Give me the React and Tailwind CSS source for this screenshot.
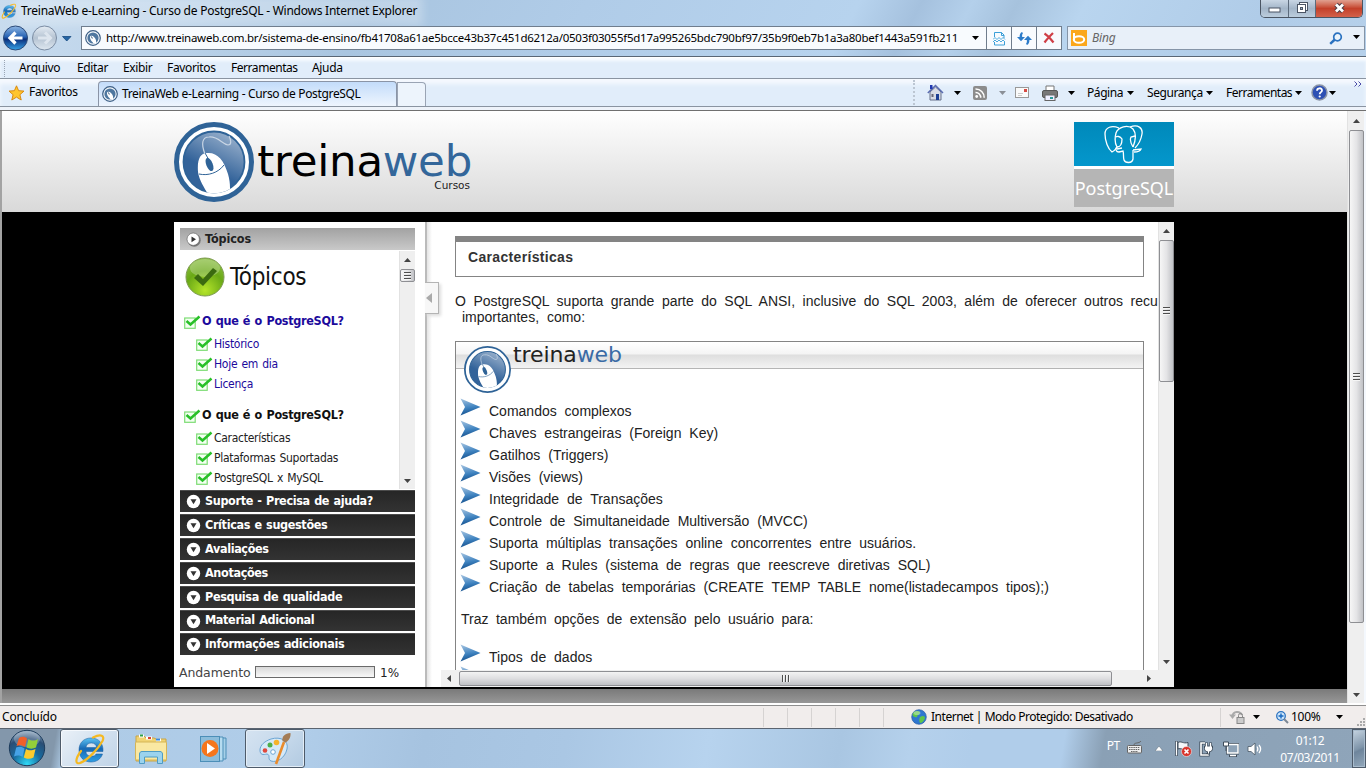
import React from "react";

const Tri = ({ className = "", w = 7 }) => (
  <svg className={"shrink-0 fill-current " + className} width={w} height="4" viewBox="0 0 7 4" preserveAspectRatio="none">
    <path d="M0 0h7L3.5 4z" />
  </svg>
);

const Mouse = ({ size, ring = 5, id }) => (
  <svg className="shrink-0" width={size} height={size} viewBox="0 0 80 80">
    <defs>
      <linearGradient id={id} x1="0.8" y1="0" x2="0.3" y2="1">
        <stop offset="0" stopColor="#9fb5cf" />
        <stop offset="0.65" stopColor="#33639a" />
      </linearGradient>
      <clipPath id={id + "c"}><circle cx="40" cy="40" r="31.5" /></clipPath>
    </defs>
    <circle cx="40" cy="40" r={40 - ring / 2} fill="#fff" stroke="#2f6397" strokeWidth={ring} />
    <circle cx="40" cy="40" r="30.5" fill={"url(#" + id + ")"} stroke="#2f6397" strokeWidth="1.8" />
    <g clipPath={"url(#" + id + "c)"}>
      <path d="M31 32C27 22 28 15 35 15C44 14 48 22 54 23C58 23 57 18 55 14" fill="none" stroke="#c8d5e4" strokeWidth="1.2" />
      <path d="M24 50C23 38 26 31 33 31C43 30 50 38 54 52C57 62 56 70 55 80H38C34 70 26 62 24 50Z" fill="#fff" />
    </g>
    <path d="M25 52C34 54 44 51 50 43" fill="none" stroke="#2f6397" strokeWidth="1" />
    <path d="M31 31L35 38" stroke="#2f6397" strokeWidth="1" />
    <ellipse cx="35.5" cy="42.5" rx="3.2" ry="7" fill="#2f6397" transform="rotate(-22 35.5 42.5)" />
  </svg>
);

const FavMouse = () => (
  <svg className="shrink-0" width="16" height="16" viewBox="0 0 16 16">
    <circle cx="8" cy="8" r="7.3" fill="#f4f8fc" stroke="#3c5f86" strokeWidth="1.2" />
    <circle cx="8" cy="8" r="5.6" fill="#4f779f" />
    <path d="M5 7C5.200 5.400 7.500 5.200 9 7C11 9 11.500 11 11 13.500L8.500 13.600C7.500 11.500 4.800 10 5 7Z" fill="#fff" />
    <path d="M6.500 6.500L7.300 8.500" stroke="#2d5178" strokeWidth="1" />
  </svg>
);

const IELogo = ({ size }) => (
  <svg className="shrink-0" width={size} height={size} viewBox="0 0 32 32">
    <defs>
      <linearGradient id={"ie" + size} x1="0" y1="0" x2="0" y2="1">
        <stop offset="0" stopColor="#5cc3f3" />
        <stop offset="0.45" stopColor="#1768b4" />
        <stop offset="1" stopColor="#2f9fe4" />
      </linearGradient>
    </defs>
    <path fillRule="evenodd" d="M29 18.500H12C12 21.500 14 23.300 17.500 23.300C20 23.300 21.500 22.300 22 21H28.500C27 26 22.500 29 17 29C9.500 29 5 24 5 17C5 10 9.500 5 17 5C25 5 29.500 10.500 29 18.500ZM12 14.500H22.500C22.500 11.800 20.500 10 17.200 10C14 10 12.200 12 12 14.500Z" fill={"url(#ie" + size + ")"} stroke="#16589a" strokeWidth="0.5" />
    <path d="M7 18C1 26 1 31.500 6 30C14 27 24 16 28.500 8C31 2.500 27 0.500 19 4.500" fill="none" stroke="#f5b921" strokeWidth="2.200" strokeLinecap="round" />
  </svg>
);

const Grip = ({ vertical }) =>
  vertical ? (
    <div className="flex flex-col gap-px">
      {[0, 1, 2].map((i) => <div key={i} className="h-[2px] w-[7px] border-b border-[#f5f5f5] bg-[#4d4d4d]" />)}
    </div>
  ) : (
    <div className="flex gap-px">
      {[0, 1, 2].map((i) => <div key={i} className="h-[7px] w-[2px] border-r border-[#f5f5f5] bg-[#4d4d4d]" />)}
    </div>
  );

const Up = () => (
  <svg width="7" height="4" viewBox="0 0 7 4"><path d="M0 4h7L3.500 0z" fill="#444" /></svg>
);

const VScroll = ({ className, thumb, cap = "h-[18px]" }) => (
  <div className={"flex shrink-0 flex-col items-center bg-[#efefef] border-l border-[#e2e2e2] " + className}>
    <div className={"flex shrink-0 items-center " + cap}><Up /></div>
    <div className={"flex w-[15px] shrink-0 items-center justify-center rounded-[2px] border border-[#8e8f93] bg-linear-to-r from-[#f6f6f6] via-[#e4e4e6] to-[#c1c2c6] " + thumb}>
      <Grip vertical />
    </div>
    <div className="grow" />
    <div className="flex h-[17px] shrink-0 items-center"><Tri className="text-[#444]" /></div>
  </div>
);

const CheckBox = () => (
  <svg className="shrink-0" width="17" height="14" viewBox="0 0 17 14">
    <rect x="0.700" y="3" width="10.500" height="10.300" fill="#f4fff2" stroke="#7ddc74" strokeWidth="1.200" />
    <path d="M2.500 6L6.500 9.500L15.500 1.500" fill="none" stroke="#28c028" strokeWidth="2.500" />
  </svg>
);

const Item = ({ children, className = "" }) => (
  <div className={"flex h-[20px] items-center gap-px pl-[16px] font-['DejaVu_Sans_Condensed','DejaVu_Sans',sans-serif] text-[12px] tracking-[-0.28px] [word-spacing:1px] " + className}>
    <CheckBox />
    <span className="whitespace-nowrap">{children}</span>
  </div>
);

const Group = ({ children, className = "" }) => (
  <div className={"flex shrink-0 items-center gap-px pl-[4px] font-['DejaVu_Sans_Condensed','DejaVu_Sans',sans-serif] text-[12.500px] font-bold tracking-[-0.3px] [word-spacing:0.8px] " + className}>
    <CheckBox />
    <span className="whitespace-nowrap">{children}</span>
  </div>
);

const Bar = ({ children, h = "h-[22px]" }) => (
  <div className={"flex shrink-0 items-center gap-[4px] border-t border-[#4c4c4c] bg-linear-to-b from-[#262626] to-[#333] pl-[6px] text-white " + h}>
    <svg className="shrink-0" width="15" height="15" viewBox="0 0 15 15">
      <circle cx="7.500" cy="7.500" r="6.700" fill="#fff" />
      <path d="M4.500 5.200h6L7.500 10.300z" fill="#333" />
    </svg>
    <span className="whitespace-nowrap pb-px font-['DejaVu_Sans_Condensed','DejaVu_Sans',sans-serif] text-[12.500px] font-bold tracking-[-0.35px] [word-spacing:0.8px]">{children}</span>
  </div>
);

const Bullet = ({ children }) => (
  <div className="flex h-[22px] shrink-0">
    <svg className="shrink-0" width="22" height="20" viewBox="0 0 22 20">
      <defs>
        <linearGradient id="blt" x1="0" y1="0" x2="0.200" y2="1">
          <stop offset="0" stopColor="#a9c6e2" />
          <stop offset="0.600" stopColor="#3f83c0" />
          <stop offset="1" stopColor="#14508e" />
        </linearGradient>
      </defs>
      <path d="M0.500 0.500L20.500 9L0.500 17.500L5 9Z" fill="url(#blt)" />
    </svg>
    <span className="whitespace-nowrap pl-[7px] pt-[2px] leading-[22px]">{children}</span>
  </div>
);

const Glass = "bg-[linear-gradient(118deg,#c9dcee_0px,#bdd4ea_150px,#a9c5e0_330px,#b0cce8_520px,#b7d3ee_760px,#a5c1de_815px,#b4d0eb_860px,#a6c2dd_900px,#b9d5ef_960px,#b0cce8_1120px,#bcd5ed_1366px)]";

const TitleBar = () => (
  <div className="flex h-[24px] shrink-0 items-start justify-between">
    <div className="flex h-[22px] items-center pl-px">
      <IELogo size={16} />
      <span className="ml-[4px] whitespace-nowrap bg-white/25 text-[12px] tracking-[-0.25px] shadow-[0_0_8px_6px_rgba(255,255,255,0.25)]">
        TreinaWeb e-Learning - Curso de PostgreSQL - Windows Internet Explorer
      </span>
    </div>
    <div className="mr-[3px] flex h-[18px] w-[103px] overflow-hidden rounded-b-[5px] border border-t-0 border-[#4a5563]">
      <div className="flex w-[28px] items-center justify-center border-r border-[#5c6b7c] bg-linear-to-b from-[#c9d6e4] via-[#a3b5c8] to-[#bccddd]">
        <svg width="13" height="12" viewBox="0 0 13 12"><rect x="1" y="5" width="11" height="4" fill="#fff" stroke="#4b5565" /></svg>
      </div>
      <div className="flex w-[27px] items-center justify-center border-r border-[#5c6b7c] bg-linear-to-b from-[#c9d6e4] via-[#a3b5c8] to-[#bccddd]">
        <svg className="mb-[2px]" width="13" height="13" viewBox="0 0 13 13">
          <rect x="3.500" y="1.500" width="8" height="8" fill="#fff" stroke="#4b5565" />
          <rect x="1.500" y="3.500" width="8" height="8" fill="#fff" stroke="#4b5565" />
          <rect x="4.500" y="6.500" width="2" height="2" fill="#9fb1c5" stroke="#4b5565" />
        </svg>
      </div>
      <div className="flex grow items-center justify-center bg-linear-to-b from-[#e0a090] via-[#c3402a] to-[#d3614a]">
        <svg className="mb-[2px]" width="13" height="12" viewBox="0 0 13 12">
          <path d="M3 2.500L10 9.500M10 2.500L3 9.500" stroke="#4b3c44" strokeWidth="4.800" />
          <path d="M3 2.500L10 9.500M10 2.500L3 9.500" stroke="#fff" strokeWidth="2.800" />
        </svg>
      </div>
    </div>
  </div>
);

const AddressRow = () => (
  <div className="flex h-[32px] shrink-0 items-start pl-[2px] pt-[2px]">
    <svg className="mt-[-2px] shrink-0" width="72" height="28" viewBox="0 0 72 28">
      <defs>
        <linearGradient id="bk" x1="0" y1="0" x2="0" y2="1">
          <stop offset="0" stopColor="#8fb7e4" /><stop offset="0.450" stopColor="#2763b4" /><stop offset="0.550" stopColor="#0a2f7c" /><stop offset="1" stopColor="#37a3e8" />
        </linearGradient>
        <linearGradient id="fw" x1="0" y1="0" x2="0" y2="1">
          <stop offset="0" stopColor="#e4ecf4" /><stop offset="0.500" stopColor="#b5c3d2" /><stop offset="1" stopColor="#dfe8f0" />
        </linearGradient>
      </defs>
      <circle cx="13.500" cy="14" r="12" fill="url(#bk)" stroke="#2c4a78" />
      <path d="M20.500 14H9M13.500 8.500L8 14l5.500 5.500" fill="none" stroke="#fff" strokeWidth="3.200" />
      <circle cx="42.500" cy="14" r="12" fill="url(#fw)" stroke="#7a8ca3" />
      <path d="M36 14h11M43 8.500L48.500 14L43 19.500" fill="none" stroke="#dde5ee" strokeWidth="3" />
      <path d="M60.500 12.500h8.500L64.750 17z" fill="#2565a4" stroke="#174a80" strokeWidth="0.800" />
    </svg>
    <div className="ml-[7px] flex h-[24px] w-[981px] shrink-0 items-center border border-[#6f7d8d] bg-[#f8fbfe]">
      <div className="ml-[3px]"><FavMouse /></div>
      <span className="ml-[5px] w-[860px] whitespace-nowrap text-[11.500px] tracking-[-0.26px]">
        http://www.treinaweb.com.br/sistema-de-ensino/fb41708a61ae5bcce43b37c451d6212a/0503f03055f5d17a995265bdc790bf97/35b9f0eb7b1a3a80bef1443a591fb211
      </span>
      <Tri className="ml-[6px]" />
      <div className="ml-auto flex h-full">
        <div className="flex w-[25px] items-center justify-center border-l border-[#6f7d8d]">
          <svg width="13" height="15" viewBox="0 0 13 15" fill="none" stroke="#3b9fd8">
            <path d="M1.500 6V1.500h7l2.500 2.500v3M8.500 1.500v3H11M1.500 11v3h10v-3" /><path d="M0 8.500l2-2 2 2 2-2 2 2 2-2 2 2M0 11l2-2 2 2 2-2 2 2 2-2 2 2" strokeWidth="0.900" />
          </svg>
        </div>
        <div className="flex w-[25px] items-center justify-center border-l border-[#6f7d8d]">
          <svg width="15" height="13" viewBox="0 0 15 13" fill="#2b7bc9">
            <path d="M5 0L6 1.200C5 2.300 5 3.500 5.200 5H8L4 9.200L0 5H2.600C2.600 2.500 3.200 1 5 0Z" />
            <path d="M10 13L9 11.800C10 10.700 10 9.500 9.800 8H7L11 3.800L15 8H12.400C12.400 10.500 11.800 12 10 13Z" />
          </svg>
        </div>
        <div className="flex w-[25px] items-center justify-center border-l border-[#6f7d8d]">
          <svg width="12" height="12" viewBox="0 0 12 12"><path d="M1.500 1.500C4 3 8 7 10.500 10.500M10 1C7 4 4 7 1.500 10.500" fill="none" stroke="#cf3f46" strokeWidth="2.200" /></svg>
        </div>
      </div>
    </div>
    <div className="ml-[5px] flex h-[24px] w-[298px] shrink-0 items-center border border-[#8595a8] bg-[#e8f0f9]">
      <div className="ml-[3px] flex h-[16px] w-[16px] items-center justify-center bg-[#fba71b]">
        <svg width="14" height="13" viewBox="0 0 14 13"><path d="M2 1V9" stroke="#fff" strokeWidth="2" /><ellipse cx="7" cy="7.500" rx="5.200" ry="3.300" fill="none" stroke="#fff" strokeWidth="2" /></svg>
      </div>
      <span className="ml-[5px] text-[12px] italic tracking-[-0.2px] text-[#666]">Bing</span>
      <svg className="ml-auto" width="14" height="13" viewBox="0 0 14 13"><circle cx="8.500" cy="5" r="3.800" fill="#eaf4fc" stroke="#2a72c0" strokeWidth="1.700" /><path d="M5.800 7.500L1.200 11.800" stroke="#2a72c0" strokeWidth="2.400" /></svg>
      <Tri className="ml-[10px] mr-[4px] mb-[3px]" />
    </div>
  </div>
);

const MenuBar = () => (
  <div className="flex h-[21px] shrink-0 items-center border-t border-white bg-[#e1edfa] text-[12px] tracking-[-0.35px] shadow-[inset_0_3px_3px_#f8fbff]">
    <div className="ml-[4px] h-[17px] w-[2px] border-l border-dotted border-[#9aa5b4]" />
    <span className="ml-[13px] w-[58px]">Arquivo</span>
    <span className="w-[46px]">Editar</span>
    <span className="w-[44px]">Exibir</span>
    <span className="w-[64px]">Favoritos</span>
    <span className="w-[81px] tracking-[-0.45px]">Ferramentas</span>
    <span>Ajuda</span>
  </div>
);

const TabRow = () => (
  <div className="flex h-[29px] shrink-0 border-y border-[#8a94a1] bg-[#e1edfa] text-[12px] tracking-[-0.35px] shadow-[inset_0_5px_4px_#f5f9fe]">
    <div className="flex w-[98px] shrink-0 items-center pl-[8px]">
      <svg width="17" height="16" viewBox="0 0 17 16"><path d="M8.500 0.800L10.600 5.700L16 6.100L11.900 9.700L13.200 15L8.500 12.100L3.800 15L5.100 9.700L1 6.100L6.400 5.700Z" fill="#ffc52e" stroke="#d98a12" strokeWidth="1" /></svg>
      <span className="ml-[4px] pb-[2px]">Favoritos</span>
    </div>
    <div className="mt-[2px] flex w-[299px] shrink-0 items-center rounded-t-[4px] border border-b-0 border-[#8a94a6] bg-linear-to-b from-[#c3dcfa] to-[#eef5fe] pl-[3px]">
      <FavMouse />
      <span className="ml-[4px] whitespace-nowrap tracking-[-0.34px]">TreinaWeb e-Learning - Curso de PostgreSQL</span>
    </div>
    <div className="mt-[3px] w-[29px] shrink-0 rounded-tr-[4px] border border-b-0 border-[#9aa4b4] bg-[#edf4fc]" />
    <div className="ml-[487px] mt-px h-[25px] w-[3px] shrink-0 border-l-2 border-dotted border-[#bcc6d2]" />
    <div className="flex grow items-center tracking-[-0.42px]">
      <svg className="ml-[11px] shrink-0" width="17" height="17" viewBox="0 0 17 17">
        <path d="M3 8v8h11V8L8.500 3z" fill="#d8dce6" stroke="#67708a" /><path d="M0.800 9L8.500 1.500L16 9" fill="none" stroke="#5a6cb0" strokeWidth="1.500" /><rect x="3" y="1" width="2.500" height="4" fill="#2038b0" /><rect x="9" y="10" width="3" height="6" fill="#1d3f94" /><rect x="4.500" y="10" width="2" height="3" fill="#667" />
      </svg>
      <Tri className="ml-[10px]" />
      <svg className="ml-[12px] shrink-0" width="14" height="14" viewBox="0 0 14 14"><rect width="14" height="14" rx="2" fill="#8c8c8c" /><circle cx="3.700" cy="10.500" r="1.400" fill="#fff" /><path d="M2.500 6.500A5 5 0 0 1 7.700 11.800M2.500 3A8.500 8.500 0 0 1 11.200 11.800" fill="none" stroke="#fff" strokeWidth="1.500" /></svg>
      <Tri className="ml-[12px] text-[#8a8f96]" />
      <svg className="ml-[9px] shrink-0" width="14" height="11" viewBox="0 0 14 11"><rect x="0.500" y="0.500" width="13" height="10" fill="#fafafa" stroke="#999" /><rect x="9" y="2" width="3" height="3" fill="#d64a42" /><path d="M3 6.500h5M3 8.500h4" stroke="#ccc" /></svg>
      <svg className="ml-[13px] shrink-0" width="16" height="16" viewBox="0 0 16 16"><path d="M4 6V1h8v5" fill="#fff" stroke="#777" /><rect x="0.500" y="5.500" width="15" height="7" rx="1.500" fill="#777" stroke="#555" /><rect x="3" y="10" width="10" height="5.500" fill="#eef" stroke="#666" /><rect x="8" y="12" width="3" height="2" fill="#2a9a9a" /></svg>
      <Tri className="ml-[10px]" />
      <span className="ml-[12px] w-[40px]">Página</span><Tri />
      <span className="ml-[13px] w-[59px]">Segurança</span><Tri />
      <span className="ml-[13px] w-[69px] tracking-[-0.5px]">Ferramentas</span><Tri />
      <svg className="ml-[9px] shrink-0" width="17" height="17" viewBox="0 0 17 17"><circle cx="8.500" cy="8.500" r="7.500" fill="#2d50b4" stroke="#8b94a6" strokeWidth="1.500" /><path d="M6 6.700C6 3.500 11 3.500 11 6.500C11 8.200 8.700 8.200 8.700 10.300" fill="none" stroke="#fff" strokeWidth="1.800" /><circle cx="8.700" cy="12.500" r="1.100" fill="#fff" /></svg>
      <Tri className="ml-px" />
      <svg className="ml-[18px] mb-[17px] shrink-0" width="8" height="6" viewBox="0 0 8 6" fill="none" stroke="#4a4aa8"><path d="M0.500 0.500L3 3L0.500 5.500M4.500 0.500L7 3L4.500 5.500" /></svg>
    </div>
  </div>
);

const PageHeader = () => (
  <div className="flex h-[101px] shrink-0 items-start bg-linear-to-b from-white to-[#d9d9d9] pl-[172px] pt-[11px]">
    <Mouse size={80} ring={5} id="mh" />
    <div className="flex w-[218px] flex-col items-end">
      <div className="mt-[20px] whitespace-nowrap font-['DejaVu_Sans',sans-serif] text-[43.500px] leading-[38px] tracking-[-0.25px] text-black">
        treina<span className="text-[#33669a]">web</span>
      </div>
      <span className="pr-[2px] font-['DejaVu_Sans',sans-serif] text-[10.500px] leading-[10px] text-[#222]">Cursos</span>
    </div>
    <div className="ml-[602px] flex w-[100px] flex-col gap-[3px] bg-white">
      <div className="flex h-[44px] justify-center bg-linear-to-b from-[#0089ba] to-[#0497cc] pt-[3px]">
        <svg width="40" height="39" viewBox="0 0 40 39" fill="none" stroke="#fff" strokeWidth="1.300">
          <path d="M15 3C8 0 1 2 1 9C1 16 4 24 8 27C11 26 12 23 13 22C10 17 11 12 12 8C14 2 24 -1 29 4C33 9 31 17 29 22" />
          <path d="M26 2C34 -1 39 3 38 9C37 15 34 20 31 23M13 22C17 22 18 19 18 14C16 11 13 11 12 12M13 22C11 24 12 27 15 27L19 26C20 29 19 32 20 35C21 38 28 39 29 34V25M29 22C26 17 26 14 27 12L31 11M29 25L37 24C36 27 33 27 30 27M13 24L18 23" />
        </svg>
      </div>
      <div className="flex h-[38px] items-center justify-center bg-[#b5b5b5] text-[18px] text-white">PostgreSQL</div>
    </div>
  </div>
);

const Sidebar = () => (
  <div className="flex w-[251px] shrink-0 flex-col pl-[6px] pt-[6px] pr-[10px]">
    <div className="flex h-[22px] shrink-0 items-center gap-[4px] bg-linear-to-b from-[#a2a2a2] to-[#c9c9c9] pl-[6px]">
      <svg width="15" height="15" viewBox="0 0 15 15"><circle cx="8.200" cy="8.200" r="6.500" fill="#777" /><circle cx="7.200" cy="7.200" r="6.200" fill="#fff" stroke="#555" strokeWidth="0.600" /><path d="M5.500 4.500L10 7.300L5.500 10.200z" fill="#333" /></svg>
      <span className="font-['DejaVu_Sans_Condensed','DejaVu_Sans',sans-serif] text-[12.500px] font-bold tracking-[-0.1px] text-[#222]">Tópicos</span>
    </div>
    <div className="flex h-[240px] shrink-0 pt-px pb-px">
      <div className="flex grow flex-col">
        <div className="flex h-[52px] shrink-0 items-center pl-[5px]">
          <svg width="40" height="40" viewBox="0 0 40 40">
            <defs><radialGradient id="gb" cx="0.500" cy="0.850" r="0.850"><stop offset="0" stopColor="#b5e52a" /><stop offset="0.600" stopColor="#6aa916" /><stop offset="1" stopColor="#8cbf45" /></radialGradient></defs>
            <circle cx="20" cy="20" r="19" fill="url(#gb)" stroke="#7d9a50" />
            <ellipse cx="20" cy="11" rx="15" ry="9" fill="#fff" fillOpacity="0.250" />
            <path d="M9 21L13 17L18 22L28 11L32 14L18 29Z" fill="#3b6a10" />
          </svg>
          <span className="ml-[5px] font-['DejaVu_Sans_Condensed','DejaVu_Sans',sans-serif] text-[24px] tracking-[-0.3px] text-[#111]">Tópicos</span>
        </div>
        <Group className="mt-[6px] h-[25px] text-[#1c0a9c]">O que é o PostgreSQL?</Group>
        <Item className="text-[#1c0a9c]">Histórico</Item>
        <Item className="text-[#1c0a9c]">Hoje em dia</Item>
        <Item className="text-[#1c0a9c]">Licença</Item>
        <Group className="mt-[9px] h-[25px] text-[#111]">O que é o PostgreSQL?</Group>
        <Item className="text-[#222]">Características</Item>
        <Item className="text-[#222]">Plataformas Suportadas</Item>
        <Item className="text-[#222]">PostgreSQL x MySQL</Item>
      </div>
      <VScroll className="w-[16px]" thumb="h-[13px]" />
    </div>
    <div className="flex flex-col gap-[2px]">
      <Bar>Suporte - Precisa de ajuda?</Bar>
      <Bar>Críticas e sugestões</Bar>
      <Bar>Avaliações</Bar>
      <Bar>Anotações</Bar>
      <Bar>Pesquisa de qualidade</Bar>
      <Bar h="h-[21px]">Material Adicional</Bar>
      <Bar>Informações adicionais</Bar>
    </div>
    <div className="ml-[-1px] mt-[9px] flex h-[18px] items-center font-['DejaVu_Sans',sans-serif] text-[12.500px] text-[#444]">
      <span className="w-[76px] tracking-[-0.1px]">Andamento</span>
      <div className="mb-[2px] h-[12px] w-[120px] border border-[#6a6a6a] bg-linear-to-b from-[#d9d9d9] to-[#f8f8f8]" />
      <span className="ml-[5px] text-[12px] text-[#222]">1%</span>
    </div>
  </div>
);

const Content = () => (
  <div className="flex h-[448px] w-[717px] shrink-0 flex-col overflow-hidden pl-[14px] pt-[14px] font-['Liberation_Sans',Arial,sans-serif] text-[14px] text-[#222] [word-spacing:4px]">
    <div className="h-[41px] w-[689px] shrink-0 border border-t-[6px] border-[#848484] pl-[12px] pt-[6px] font-bold leading-[18px] tracking-[0.33px] text-[#333]">Características</div>
    <p className="mt-[16px] w-[900px] shrink-0 whitespace-pre leading-[16px] [word-spacing:3.600px]">{"O PostgreSQL suporta grande parte do SQL ANSI, inclusive do SQL 2003, além de oferecer outros recursos"}</p>
    <p className="shrink-0 pl-[7px] leading-[16px]">importantes, como:</p>
    <div className="mt-[16px] flex w-[689px] shrink-0 flex-col border border-[#848484]">
      <div className="flex h-[27px] items-start border-b border-[#b5b5b5] bg-[linear-gradient(#fff_0,#f4f4f4_12px,#dedede_13px,#f3f3f3_26px)] pl-[8px]">
        <div className="mt-[4px]"><Mouse size={47} ring={3} id="mc" /></div>
        <span className="ml-[2px] font-['DejaVu_Sans',sans-serif] text-[22px] leading-[26px] tracking-[-0.1px] text-[#222]">treina<span className="text-[#3a6ba5]">web</span></span>
      </div>
      <div className="mt-[29px] flex flex-col pl-[4px]">
        <Bullet>Comandos complexos</Bullet>
        <Bullet>Chaves estrangeiras (Foreign Key)</Bullet>
        <Bullet>Gatilhos (Triggers)</Bullet>
        <Bullet>Visões (views)</Bullet>
        <Bullet>Integridade de Transações</Bullet>
        <Bullet>Controle de Simultaneidade Multiversão (MVCC)</Bullet>
        <Bullet>Suporta múltiplas transações online concorrentes entre usuários.</Bullet>
        <Bullet>Suporte a Rules (sistema de regras que reescreve diretivas SQL)</Bullet>
        <Bullet>Criação de tabelas temporárias (CREATE TEMP TABLE nome(listadecampos tipos);)</Bullet>
        <p className="mb-[16px] mt-[15px] pl-px leading-[17px] [word-spacing:3.600px]">Traz também opções de extensão pelo usuário para:</p>
        <Bullet>Tipos de dados</Bullet>
        <Bullet>Funções</Bullet>
      </div>
    </div>
  </div>
);

const Course = () => (
  <div className="ml-[172px] mt-[10px] flex h-[465px] w-[1000px] bg-white">
    <Sidebar />
    <div className="flex w-[16px] shrink-0 items-start border-l-2 border-[#bbb] bg-[linear-gradient(90deg,#e4e4e4,#fff_5px)] pt-[60px]">
      <div className="ml-[-2px] flex h-[32px] w-[14px] items-center justify-center border border-l-0 border-[#b4b4b4] bg-[#f7f7f7] pr-[5px] shadow-[2px_2px_3px_#ddd]">
        <svg width="6" height="10" viewBox="0 0 6 10"><path d="M6 0v10L0 5z" fill="#aaa" /></svg>
      </div>
    </div>
    <div className="flex w-[717px] shrink-0 flex-col">
      <Content />
      <div className="flex h-[17px] w-[717px] shrink-0 items-center bg-[#f0f0f0]">
        <svg className="ml-[6px]" width="4" height="7" viewBox="0 0 4 7"><path d="M4 0v7L0 3.500z" fill="#444" /></svg>
        <div className="ml-[8px] flex h-[15px] w-[653px] items-center justify-center rounded-[2px] border border-[#8e8f93] bg-linear-to-b from-[#f3f3f3] via-[#dedee0] to-[#bfc0c4]"><Grip /></div>
        <svg className="ml-auto mr-[7px]" width="4" height="7" viewBox="0 0 4 7"><path d="M0 0v7L4 3.500z" fill="#444" /></svg>
      </div>
    </div>
    <div className="flex w-[16px] shrink-0 flex-col bg-[#f0f0f0]">
      <VScroll className="h-[448px] w-[16px]" thumb="h-[142px]" />
    </div>
  </div>
);

const StatusBar = () => (
  <div className="flex h-[22px] shrink-0 items-center bg-[#f1edec] text-[12px] tracking-[-0.3px]">
    <span className="w-[763px] shrink-0 pl-[2px] tracking-[-0.15px]">Concluído</span>
    {[0, 1, 2, 3, 4].map((i) => <div key={i} className="h-[19px] w-[24px] shrink-0 border-l border-[#d6d3d2]" />)}
    <div className="flex h-[19px] w-[25px] shrink-0 border-l border-[#d6d3d2]" />
    <svg className="ml-[3px] shrink-0" width="16" height="16" viewBox="0 0 16 16"><circle cx="8" cy="8" r="7.300" fill="#2f77d0" stroke="#2a5fa5" strokeWidth="0.700" /><path d="M3 3C6 1 9 2 9 4C8 6 6 6 6 8C4 9 2 7 1.500 6C2 4 2 4 3 3ZM9 8C12 6 14 7 14 9C13 12 11 14 9 14C8 12 8 10 9 8Z" fill="#5fc54a" /><ellipse cx="6" cy="4" rx="3.500" ry="2" fill="#fff" fillOpacity="0.350" /></svg>
    <span className="ml-[4px] w-[289px] shrink-0 whitespace-nowrap tracking-[-0.48px]">Internet | Modo Protegido: Desativado</span>
    <div className="flex h-[19px] w-[45px] shrink-0 items-center border-l border-[#d6d3d2] pl-[8px]">
      <svg width="17" height="15" viewBox="0 0 17 15"><path d="M3.500 6C4 1 11 0.500 13 5" fill="none" stroke="#aaa" strokeWidth="2" /><path d="M0 4.500h7L3.500 9z" fill="#aaa" /><rect x="8" y="7.500" width="7" height="6" fill="#ccc" stroke="#888" /><path d="M9.500 7V5.500a2 2 0 0 1 4 0V7" fill="none" stroke="#888" /></svg>
      <Tri className="ml-[7px]" />
    </div>
    <div className="flex grow items-center pl-[11px]">
      <svg width="13" height="13" viewBox="0 0 13 13"><circle cx="5" cy="5" r="4.300" fill="#cfe6fa" stroke="#2a72c0" strokeWidth="1.300" /><path d="M5 2.500v5M2.500 5h5" stroke="#1668c0" strokeWidth="1.400" /><path d="M8 8L12 12" stroke="#7c8794" strokeWidth="2" /></svg>
      <span className="ml-[2px] w-[45px]">100%</span>
      <Tri />
      <svg className="ml-auto mr-px mt-[10px]" width="8" height="8" viewBox="0 0 8 8" fill="#aaa"><path d="M6 0h2v2H6zM3 3h2v2H3zM6 3h2v2H6zM0 6h2v2H0zM3 6h2v2H3zM6 6h2v2H6z" /></svg>
    </div>
  </div>
);

const Taskbar = () => (
  <div className="flex h-[40px] shrink-0 items-start border-t border-[#5b6470] bg-[linear-gradient(100deg,#8397ab_0px,#8397ab_56px,#aecbe6_68px,#b0cde9_300px,#a6c3e0_420px,#aac7e4_560px,#b7d3ee_700px,#a9c6e2_830px,#b5d1ec_900px,#b0cdea_960px,#b0cdea_1050px,#8aa0b5_1090px,#8fa5ba_1366px)]">
    <div className="flex w-[60px] shrink-0 justify-center pr-[6px]">
      <svg width="38" height="38" viewBox="0 0 38 38">
        <defs><radialGradient id="orb" cx="0.500" cy="0.950" r="0.900"><stop offset="0" stopColor="#2fd9f6" /><stop offset="0.450" stopColor="#186a9e" /><stop offset="0.800" stopColor="#2a4d74" /><stop offset="1" stopColor="#7c97b2" /></radialGradient></defs>
        <circle cx="19" cy="19" r="17.700" fill="url(#orb)" stroke="#1d3c5c" />
        <ellipse cx="19" cy="10" rx="13" ry="8" fill="#fff" fillOpacity="0.250" />
        <path d="M11 9C14 7 17 7.500 19 9.500L17 18C14 16 11 16 8.500 17Z" fill="#f0602a" />
        <path d="M20.500 10C23 12 27 12 30 10L28 18.500C25 20 21.500 20 18.500 18.500Z" fill="#93cf3a" />
        <path d="M8.200 18.500C11 17 14 17.500 16.500 19.500L14.500 28C12 26 9 26 6 27.500Z" fill="#46a2e6" />
        <path d="M18 20C20.500 22 24.500 21.500 27.500 20L25.500 28.500C22 30.500 18.500 30 15.800 28.500Z" fill="#fccb2e" />
      </svg>
    </div>
    <div className="flex h-[39px] w-[59px] shrink-0 items-center justify-center rounded-[3px] border border-[#4e5b6a] bg-[linear-gradient(135deg,#eaf1f8,#d3e1ef_50%,#bfd3e7)] shadow-[inset_0_0_0_1px_#f5f9fd]"><IELogo size={32} /></div>
    <div className="flex h-[39px] w-[64px] shrink-0 items-center justify-center">
      <svg width="34" height="32" viewBox="0 0 34 32">
        <path d="M2 3h8l2 2h8l2 1h10v22H2z" fill="#f0d372" stroke="#c9a544" />
        <path d="M5 3h5M12 5h6M22 7h5" stroke="#fff" strokeWidth="3" /><path d="M6 2.500h3" stroke="#2fa04a" strokeWidth="2" /><path d="M14 5h3" stroke="#d64535" strokeWidth="2" /><path d="M22 6.500h4" stroke="#3a8ae0" strokeWidth="2" />
        <rect x="1.500" y="9" width="31" height="18" rx="1" fill="#f9e8a2" stroke="#d5b557" />
        <path d="M5.500 30.500V21c0-1.500 1-2.500 2.500-2.500h18c1.500 0 2.500 1 2.500 2.500v9.500h-5V24H10.500v6.500z" fill="#9bd3ee" stroke="#4f9cc4" />
      </svg>
    </div>
    <div className="flex h-[39px] w-[62px] shrink-0 items-center justify-center">
      <svg width="30" height="28" viewBox="0 0 30 28">
        <path d="M23 3h4v21h-4z" fill="#a6d0e8" stroke="#4c8fb8" /><path d="M20 2h4v24h-4z" fill="#b6dcf0" stroke="#4c8fb8" />
        <rect x="1.500" y="1.500" width="19" height="25" fill="#8cbddb" stroke="#4c8fb8" />
        <circle cx="11" cy="13.500" r="8.500" fill="#f5761c" /><path d="M8 8L16 13.500L8 19z" fill="#fff" />
      </svg>
    </div>
    <div className="flex h-[39px] w-[60px] shrink-0 items-center justify-center rounded-[3px] border border-[#4e5b6a] bg-[linear-gradient(135deg,#d5e3f1,#c6d9eb_50%,#b2cae1)] shadow-[inset_0_0_0_1px_#e3edf6]">
      <svg width="34" height="34" viewBox="0 0 34 34">
        <path d="M13 7C23 4 31 9 29 17C27 26 19 31 13 29C9 27 13 23 9 22C5 23 2 23 2 18C2 13 7 9 13 7Z" fill="#d5e9f8" stroke="#6ca5d3" />
        <circle cx="7" cy="18.500" r="2.300" fill="#e0483c" /><circle cx="12" cy="13" r="2.500" fill="#4cae4c" /><circle cx="18.500" cy="10.500" r="2.800" fill="#f5b32c" /><circle cx="15" cy="20" r="2.300" fill="#fff" stroke="#6ca5d3" />
        <path d="M18 32L26 10" stroke="#e98b2c" strokeWidth="2.600" /><path d="M24.500 9C23.500 4.500 27 1.500 32.500 1C33 5 31 8.500 27.500 10.500Z" fill="#a47c55" />
      </svg>
    </div>
    <div className="flex h-[39px] grow items-center justify-end text-[12px] tracking-[-0.3px] text-white">
      <span className="mb-[6px] mr-[7px]">PT</span>
      <svg className="mb-[3px]" width="16" height="14" viewBox="0 0 16 14"><rect x="0.500" y="5.500" width="14" height="7.500" rx="1" fill="#eee" stroke="#666" /><path d="M2 7.500h11M2 9.500h11M4 11.500h7" stroke="#666" strokeDasharray="1.500 0.700" /><path d="M7 5C7 2 12 4 14 1" fill="none" stroke="#666" /></svg>
      <svg className="ml-[12px]" width="8" height="5" viewBox="0 0 8 5"><path d="M0 5h8L4 0z" fill="#fff" stroke="#567" strokeWidth="0.500" /></svg>
      <svg className="ml-[12px]" width="17" height="17" viewBox="0 0 17 17"><path d="M1.500 1v15" stroke="#3f4c5a" strokeWidth="2.600" /><path d="M1.500 1.500v14" stroke="#fff" strokeWidth="1.200" /><path d="M3 2.500C6 0.500 8 4 13 2.500V9C9 11 6 7.500 3 9Z" fill="#f4f7fa" stroke="#3f4c5a" /><circle cx="11.500" cy="11.500" r="5" fill="#d8342c" stroke="#fff" strokeWidth="0.500" /><path d="M9.500 9.500L13.500 13.500M13.500 9.500L9.500 13.500" stroke="#fff" strokeWidth="1.700" /></svg>
      <svg className="ml-[7px]" width="15" height="17" viewBox="0 0 15 17"><path d="M6 3H2v12h7v-2" fill="none" stroke="#3f4c5a" strokeWidth="3.200" /><path d="M6 3H2v12h7v-2" fill="none" stroke="#fff" strokeWidth="1.600" /><path d="M7.500 6.500V2.500M11.500 6.500V2.500" stroke="#3f4c5a" strokeWidth="3" /><path d="M5.500 6h8v2.500c0 2-1 3-3 3.200V14h-2v-2.300c-2-.2-3-1.200-3-3.200z" fill="#fff" stroke="#3f4c5a" /><path d="M7.500 7V3M11.500 7V3" stroke="#fff" strokeWidth="1.400" /></svg>
      <svg className="ml-[9px]" width="16" height="16" viewBox="0 0 16 16"><path d="M4.500 3.500h10.500v8.500H4.500z" fill="#8da2b6" stroke="#3f4c5a" strokeWidth="3" /><rect x="4.500" y="3.500" width="10.500" height="8.500" fill="#8da2b6" stroke="#fff" strokeWidth="1.500" /><path d="M6 15h8" stroke="#3f4c5a" strokeWidth="2.500" /><path d="M7 14.500h6" stroke="#fff" strokeWidth="1.500" /><path d="M0.500 1h5v4h-5zM3 5v5" fill="#fff" stroke="#3f4c5a" /></svg>
      <svg className="ml-[8px]" width="16" height="16" viewBox="0 0 16 16"><path d="M1 5.500h3L8 2v12L4 10.500H1z" fill="#fff" stroke="#4a5866" strokeWidth="0.800" /><path d="M10 5.500C11 7 11 9 10 10.500M12 4C14 6.500 14 9.500 12 12" fill="none" stroke="#fff" strokeWidth="1.300" /></svg>
      <div className="ml-[16px] flex w-[62px] flex-col items-center text-[12px] leading-[17px] tracking-[-0.45px]"><span>01:12</span><span>07/03/2011</span></div>
      <div className="ml-[11px] h-[39px] w-[14px] border border-[#4e5b6a] bg-[linear-gradient(155deg,#c6d4e1,#7e94a9_50%,#6e859c_55%,#93a8bb)] shadow-[inset_0_0_0_1px_#a9bccd]" />
    </div>
  </div>
);

export default function App() {
  return (
    <div className="flex h-[768px] w-[1366px] flex-col overflow-hidden bg-black font-['Noto_Sans','Open_Sans',sans-serif] text-black">
      <div className={"flex h-[57px] shrink-0 flex-col border-b border-[#596675] " + Glass}>
        <TitleBar />
        <AddressRow />
      </div>
      <MenuBar />
      <TabRow />
      <div className="h-[4px] shrink-0 border-b border-[#707070] bg-[#eef3fa]" />
      <div className="flex h-[592px] shrink-0 border-l-2 border-[#a3a3a3] bg-black">
        <div className="flex w-[1345px] shrink-0 flex-col">
          <PageHeader />
          <Course />
          <div className="mt-[2px] h-[14px] shrink-0 bg-linear-to-b from-[#7a7a7a] to-[#979797]" />
        </div>
        <VScroll className="h-full w-[17px]" thumb="h-[493px]" cap="h-[19px]" />
        <div className="grow bg-[#f4f8fd]" />
      </div>
      <div className="h-[3px] shrink-0 border-b border-[#8f8f8f] bg-white" />
      <StatusBar />
      <Taskbar />
    </div>
  );
}
